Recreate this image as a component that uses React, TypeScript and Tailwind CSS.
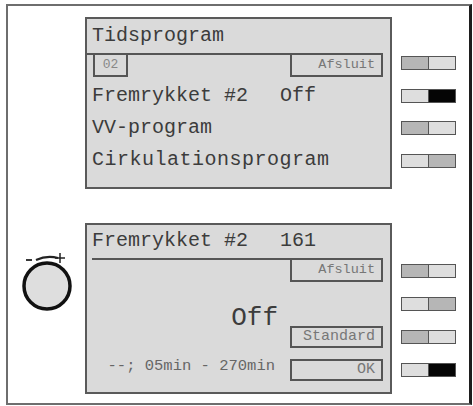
import React from 'react';

type Tone = 'dark' | 'light' | 'black';

const toneClass: Record<Tone, string> = {
  dark: 'bg-[#b6b6b6]',
  light: 'bg-[#dedede]',
  black: 'bg-[#050505]',
};

const SoftKey: React.FC<{ left: Tone; right: Tone; className?: string }> = ({ left, right, className = '' }) => (
  <div className={`flex h-[14px] w-[55px] border-[1.5px] border-[#555] ${className}`}>
    <div className={`flex-1 border-r-[1.5px] border-[#555] ${toneClass[left]}`} />
    <div className={`flex-1 ${toneClass[right]}`} />
  </div>
);

const Knob: React.FC = () => (
  <svg width="56" height="64" viewBox="0 0 56 64" className="ml-[12px] mt-[27px]">
    <circle cx="27" cy="36" r="23" fill="#dedede" stroke="#111" strokeWidth="3.5" />
    <line x1="6" y1="10" x2="12" y2="10" stroke="#222" strokeWidth="1.8" />
    <path d="M16 10 Q27 5 38 8" fill="none" stroke="#222" strokeWidth="2.2" />
    <line x1="35" y1="8" x2="45" y2="8" stroke="#222" strokeWidth="1.5" />
    <line x1="40" y1="3" x2="40" y2="13" stroke="#222" strokeWidth="1.5" />
  </svg>
);

const mono = "font-['Liberation_Mono','Courier_New',monospace]";

export default function App() {
  return (
    <div className={`h-[406px] w-[473px] bg-white pl-[6px] pt-[4px] ${mono}`}>
      <div className="h-[401px] w-[466px] border-2 border-[#6e6e6e] border-r-[3px] border-r-[#1e1e1e]">
        {/* top screen */}
        <div className="mt-[11px] flex">
          <div className="w-[77px]" />
          <div className="h-[172px] w-[307px] border-2 border-[#5a5a5a] bg-[#dadada] text-[20px] text-[#3c3c3c]">
            <div className="h-[34px] pl-[5px] pt-[5px] leading-[24px]">Tidsprogram</div>
            <div className="mr-[7px] flex border-t-2 border-[#555]">
              <div className="ml-[6px] flex h-[22px] w-[35px] items-center justify-center border-2 border-t-0 border-[#555] text-[13px] text-[#888]">
                02
              </div>
              <div className="ml-auto flex h-[22px] w-[93px] items-center justify-end border-2 border-t-0 border-[#555] pr-[6px] text-[13.5px] text-[#777]">
                Afsluit
              </div>
            </div>
            <div className="mt-[3px] flex h-[32px] items-center pl-[5px] leading-[24px]">
              <span className="w-[188px]">Fremrykket #2</span>
              <span>Off</span>
            </div>
            <div className="flex h-[32px] items-center pl-[5px] leading-[24px]">VV-program</div>
            <div className="flex h-[32px] items-center pl-[5px] leading-[24px] tracking-[0.5px]">Cirkulationsprogram</div>
          </div>
          <div className="ml-[9px] flex flex-col pt-[39px]">
            <SoftKey left="dark" right="light" />
            <SoftKey left="light" right="black" className="mt-[19px]" />
            <SoftKey left="dark" right="light" className="mt-[18px]" />
            <SoftKey left="light" right="dark" className="mt-[19px]" />
          </div>
        </div>

        {/* bottom screen */}
        <div className="mt-[34px] flex">
          <div className="w-[77px]">
            <Knob />
          </div>
          <div className="h-[171px] w-[307px] border-2 border-[#5a5a5a] bg-[#dadada] text-[#3c3c3c]">
            <div className="h-[33px] pl-[5px] pt-[4px] text-[20px] leading-[24px]">
              <span className="inline-block w-[188px]">Fremrykket #2</span>
              <span>161</span>
            </div>
            <div className="ml-[5px] mr-[7px] flex border-t-2 border-[#555]">
              <div className="ml-auto flex h-[22px] w-[93px] items-center justify-end border-2 border-t-0 border-[#555] pr-[6px] text-[13.5px] text-[#777]">
                Afsluit
              </div>
            </div>
            <div className="ml-[5px] mr-[7px] flex">
              <div className="flex flex-1 flex-col items-end">
                <div className="mr-[12px] mt-[23px] text-[26px] leading-[26px] text-[#3c3c3c]">Off</div>
                <div className="mr-[15px] mt-[26px] whitespace-pre text-[15.5px] leading-[18px] text-[#666]">
                  --; 05min - 270min
                </div>
              </div>
              <div className="flex w-[93px] flex-col">
                <div className="mt-[44px] flex h-[22px] items-center justify-end border-2 border-[#555] pr-[6px] text-[15px] text-[#777]">
                  Standard
                </div>
                <div className="mt-[11px] flex h-[22px] items-center justify-end border-2 border-[#555] pr-[6px] text-[15px] text-[#777]">
                  OK
                </div>
              </div>
            </div>
          </div>
          <div className="ml-[9px] flex flex-col pt-[41px]">
            <SoftKey left="dark" right="light" />
            <SoftKey left="light" right="dark" className="mt-[19px]" />
            <SoftKey left="dark" right="light" className="mt-[19px]" />
            <SoftKey left="light" right="black" className="mt-[19px]" />
          </div>
        </div>
      </div>
    </div>
  );
}
